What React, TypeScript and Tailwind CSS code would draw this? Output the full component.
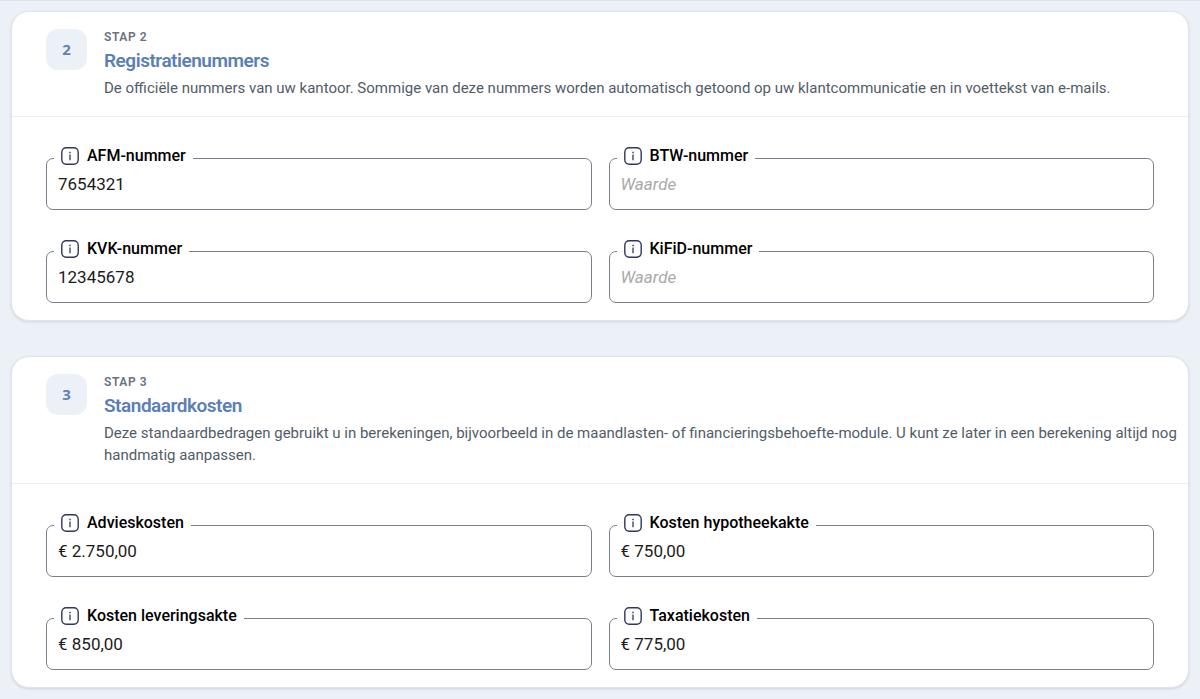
interface Field {
  id: string;
  label: string;
  value?: string;
}

interface Step {
  number: number;
  title: string;
  description: string;
  fields: Field[];
}

const steps: Step[] = [
  {
    number: 2,
    title: "Registratienummers",
    description:
      "De officiële nummers van uw kantoor. Sommige van deze nummers worden automatisch getoond op uw klantcommunicatie en in voettekst van e-mails.",
    fields: [
      { id: "afm", label: "AFM-nummer", value: "7654321" },
      { id: "btw", label: "BTW-nummer" },
      { id: "kvk", label: "KVK-nummer", value: "12345678" },
      { id: "kifid", label: "KiFiD-nummer" },
    ],
  },
  {
    number: 3,
    title: "Standaardkosten",
    description:
      "Deze standaardbedragen gebruikt u in berekeningen, bijvoorbeeld in de maandlasten- of financieringsbehoefte-module. U kunt ze later in een berekening altijd nog handmatig aanpassen.",
    fields: [
      { id: "advies", label: "Advieskosten", value: "€ 2.750,00" },
      { id: "hypotheekakte", label: "Kosten hypotheekakte", value: "€ 750,00" },
      { id: "leveringsakte", label: "Kosten leveringsakte", value: "€ 850,00" },
      { id: "taxatie", label: "Taxatiekosten", value: "€ 775,00" },
    ],
  },
];

const InfoIcon = () => (
  <svg width="18" height="18" viewBox="0 0 18 18" fill="none" stroke="#30365f" aria-hidden="true">
    <rect x="0.8" y="0.8" width="16.4" height="16.4" rx="4.4" strokeWidth="1.4" />
    <path d="M9 7.6v5.6" strokeWidth="1.3" />
    <path d="M9 4.7v1.5" strokeWidth="1.4" />
  </svg>
);

const TextField = ({ id, label, value }: Field) => (
  <fieldset className="min-w-0 rounded-[7px] border border-[#7b7f8c]">
    <legend className="ml-[7px] h-6 px-[7px]">
      <div className="flex h-[19px] items-center gap-2">
        <InfoIcon />
        <label htmlFor={id} className="text-base leading-[18px] font-medium text-black">
          {label}
        </label>
      </div>
    </legend>
    <input
      id={id}
      type="text"
      defaultValue={value}
      placeholder="Waarde"
      className="block h-[39px] w-full bg-transparent px-[11px] pb-[11px] text-[17px] text-[#1b1b1b] outline-none placeholder:text-[#a9a9a9] placeholder:italic"
    />
  </fieldset>
);

const StepCard = ({ number, title, description, fields }: Step) => (
  <section className="rounded-[18px] border border-[#e1e4e9] bg-white shadow-[0_1px_3px_rgba(0,0,0,0.12)]">
    {/* Kop */}
    <header className="flex gap-[17px] border-b border-[#eeeff1] py-[17px] pr-2 pl-[34px]">
      <div className="flex size-[41px] shrink-0 items-center justify-center rounded-xl bg-[#ecf0f7] font-['Noto_Sans'] text-[15px] font-bold text-[#5f82b7]">
        {number}
      </div>
      <div>
        <p className="text-xs leading-4 font-semibold tracking-wider text-[#697180] uppercase">Stap {number}</p>
        <h2 className="mt-1 text-[19px] leading-6 font-semibold tracking-tight text-[#5b7fb5]">{title}</h2>
        <p className="mt-1 text-[15px] leading-[22px] text-[#525c68]">{description}</p>
      </div>
    </header>

    {/* Velden */}
    <div className="grid grid-cols-2 gap-x-[17px] gap-y-[29px] px-[34px] pt-[29px] pb-[17px]">
      {fields.map((field) => (
        <TextField key={field.id} {...field} />
      ))}
    </div>
  </section>
);

const App = () => {
  return (
    <main className="flex min-h-screen flex-col gap-[35px] border-t border-[#dfe3e8] bg-[#ecf1f8] px-[11px] py-[10px] font-[Roboto,sans-serif]">
      {steps.map((step) => (
        <StepCard key={step.number} {...step} />
      ))}
    </main>
  );
};

export default App;
